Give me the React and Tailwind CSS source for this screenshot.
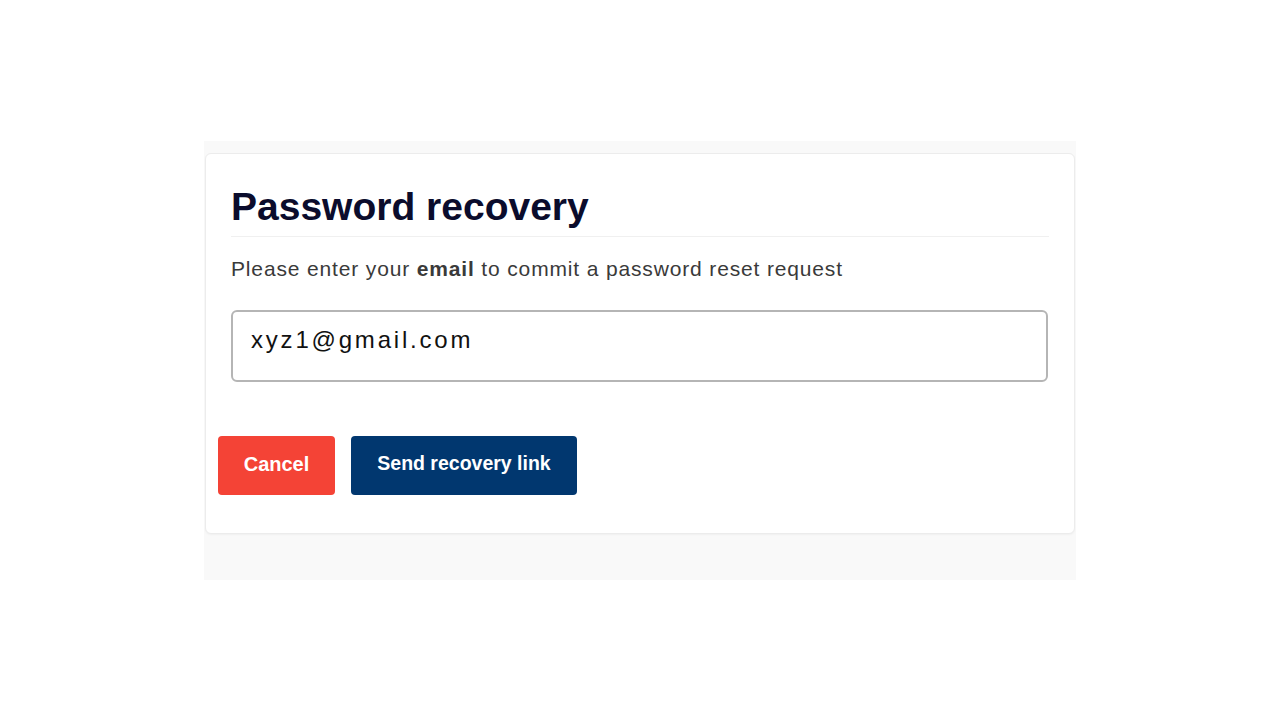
import React from 'react';

const App = () => {
  return (
    <div className="min-h-screen w-full bg-white" style={{ fontFamily: '"Liberation Sans", Arial, sans-serif' }}>
      <div className="pt-[141px] pl-[204px]">
        <div className="w-[872px] bg-[#f9f9f9] pt-[12px] pb-[46px]">
          <div className="ml-[1px] w-[870px] h-[381px] bg-white rounded-md border border-[#ececec] shadow-[0_1px_2px_rgba(0,0,0,0.04)] px-[25px] pt-[31px]">
            <h1 className="text-[39px] leading-[44px] font-bold text-[#0b0c2c] pb-[7px] border-b border-[#f0f0f0]">
              Password recovery
            </h1>
            <p className="mt-[18px] text-[21px] leading-[28px] tracking-[0.85px] text-[#3a3a3a]">
              Please enter your <span className="font-bold">email</span> to commit a password reset request
            </p>
            <div className="mt-[27px] h-[72px] w-[817px] rounded-md border-2 border-[#b5b5b5] px-[18px] pt-[13px]">
              <span className="text-[24px] leading-[30px] tracking-[2.8px] text-[#111]">xyz1@gmail.com</span>
            </div>
            <div className="mt-[54px] -ml-[13px] flex gap-[16px]">
              <button className="h-[59px] w-[117px] rounded-[4px] bg-[#f44336] text-white text-[20px] font-bold pb-[3px]">
                Cancel
              </button>
              <button className="h-[59px] w-[226px] rounded-[4px] bg-[#01376f] text-white text-[19.5px] font-bold pb-[3px]">
                Send recovery link
              </button>
            </div>
          </div>
        </div>
      </div>
    </div>
  );
};

export default App;
